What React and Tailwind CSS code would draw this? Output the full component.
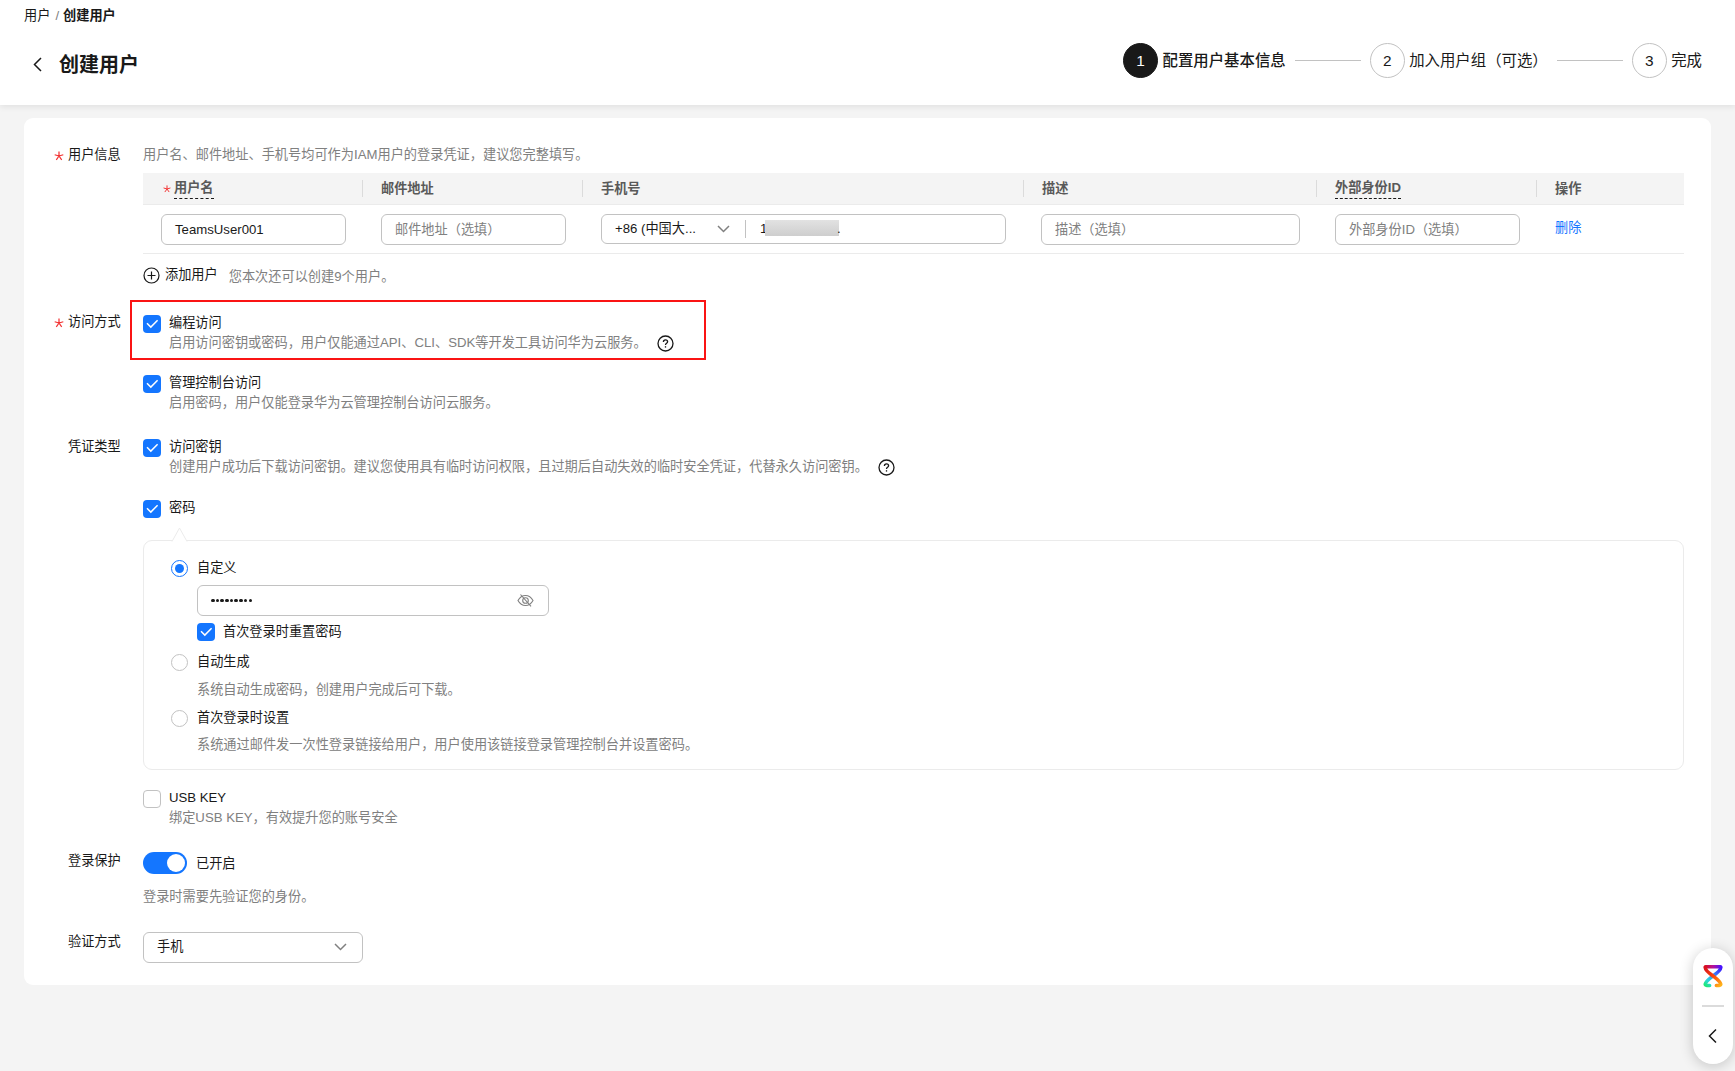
import React from 'react';

const columns = [
  { title: '用户名', width: 'w-[220px]', required: true, dashed: true },
  { title: '邮件地址', width: 'w-[220px]' },
  { title: '手机号', width: 'w-[441px]' },
  { title: '描述', width: 'w-[293px]' },
  { title: '外部身份ID', width: 'w-[220px]', dashed: true },
  { title: '操作', width: 'w-[147px]' },
];

const Star = ({ className = '' }) => (
  <svg viewBox="0 0 10 10" className={`shrink-0 ${className}`} fill="none" stroke="#f23030" strokeWidth="1.2">
    <path d="M5 0.5V5M5 5L0.7 3.7M5 5L9.3 3.7M5 5L2.3 8.8M5 5L7.7 8.8" />
  </svg>
);

const ChevronDown = () => (
  <svg width="13" height="8" viewBox="0 0 13 8" className="shrink-0" fill="none" stroke="#808080" strokeWidth="1.5">
    <path d="M1 1L6.5 6.5L12 1" />
  </svg>
);

const ChevronLeft = ({ width, height }) => (
  <svg width={width} height={height} viewBox="0 0 9 15" fill="none" stroke="#191919" strokeWidth="1.5">
    <path d="M8 1L1.5 7.5L8 14" />
  </svg>
);

const HelpIcon = () => (
  <svg width="17" height="17" viewBox="0 0 17 17" fill="none" stroke="#191919" strokeWidth="1.3">
    <circle cx="8.5" cy="8.5" r="7.5" />
    <path d="M6.4 7.1C6.4 5.7 7.3 4.9 8.5 4.9C9.7 4.9 10.6 5.7 10.6 6.8C10.6 8.3 8.5 8.3 8.5 10" />
    <path d="M8.5 11.2V12.6" />
  </svg>
);

const EyeOff = () => (
  <svg width="17" height="13" viewBox="0 0 17 13" fill="none" stroke="#808080" strokeWidth="1.1">
    <path d="M1 6.5C2.8 3.2 5.4 1.5 8.5 1.5C11.6 1.5 14.2 3.2 16 6.5C14.2 9.8 11.6 11.5 8.5 11.5C5.4 11.5 2.8 9.8 1 6.5Z" />
    <circle cx="8.5" cy="6.5" r="2.8" />
    <path d="M3.5 0.5L14 12.3" />
  </svg>
);

const Checkbox = ({ checked }) =>
  checked ? (
    <span className="flex h-[18px] w-[18px] shrink-0 items-center justify-center rounded-[4px] bg-[#1476ff]">
      <svg width="18" height="18" viewBox="0 0 18 18" fill="none" stroke="#fff" strokeWidth="1.5">
        <path d="M4 8.3L7.8 12.1L14.6 5.2" />
      </svg>
    </span>
  ) : (
    <span className="block h-[18px] w-[18px] shrink-0 rounded-[4px] border border-[#c2c2c2] bg-white" />
  );

const Radio = ({ checked }) => (
  <span
    className={`flex h-[17px] w-[17px] shrink-0 items-center justify-center rounded-full border ${
      checked ? 'border-[#1476ff]' : 'border-[#c2c2c2]'
    }`}
  >
    {checked && <span className="h-[9px] w-[9px] rounded-full bg-[#1476ff]" />}
  </span>
);

const Option = ({ checked, title, desc, help }) => (
  <div className="flex">
    <div className="pt-[2px]">
      <Checkbox checked={checked} />
    </div>
    <div className="ml-2">
      <div>{title}</div>
      {desc && (
        <div className="flex items-center text-[#808080]">
          <span>{desc}</span>
          {help && (
            <span className="ml-[10px]">
              <HelpIcon />
            </span>
          )}
        </div>
      )}
    </div>
  </div>
);

const RadioOption = ({ checked, title }) => (
  <div className="flex items-center">
    <Radio checked={checked} />
    <span className="ml-[9px]">{title}</span>
  </div>
);

const FormRow = ({ label, required, className = '', children }) => (
  <div className={`flex ${className}`}>
    <div className="flex w-[119px] shrink-0 items-start pl-[30px]">
      {required ? <Star className="mt-[6px] mr-1 h-[10px] w-[10px]" /> : <span className="w-[14px]" />}
      <span>{label}</span>
    </div>
    <div className="w-[1541px]">{children}</div>
  </div>
);

const Field = ({ value, placeholder }) => (
  <div className="flex h-[31px] items-center rounded-[6px] border border-[#c2c2c2] bg-white pl-[13px]">
    {value ? <span>{value}</span> : <span className="text-[#808080]">{placeholder}</span>}
  </div>
);

const Step = ({ number, title, active }) => (
  <div className="flex items-center">
    <span
      className={`flex h-[35px] w-[35px] items-center justify-center rounded-full border ${
        active ? 'border-[#191919] bg-[#191919] text-white' : 'border-[#c2c2c2]'
      }`}
    >
      {number}
    </span>
    <span className={`ml-[4.5px] ${active ? 'font-medium' : ''}`}>{title}</span>
  </div>
);

const StepLine = () => <span className="mx-[9px] h-px w-[66px] bg-[#c2c2c2]" />;

const Header = () => (
  <header className="relative h-[105px] bg-white shadow-[0_2px_6px_rgba(0,0,0,0.08)]">
    <div className="flex h-[30px] items-center pt-[2px] pl-6">
      <span>用户</span>
      <span className="mr-1 ml-[5px] text-[#808080]">/</span>
      <span className="font-bold">创建用户</span>
    </div>
    <div className="flex items-start justify-between pr-[33px] pl-[33px]">
      <div className="flex items-center pt-[20px]">
        <span className="mb-[2px]">
          <ChevronLeft width={9} height={15} />
        </span>
        <h1 className="ml-[17px] text-[20px] leading-[30px] font-bold">创建用户</h1>
      </div>
      <div className="flex items-center pt-[13px] text-[15.4px]">
        <Step number="1" title="配置用户基本信息" active />
        <StepLine />
        <Step number="2" title="加入用户组（可选）" />
        <StepLine />
        <Step number="3" title="完成" />
      </div>
    </div>
  </header>
);

const UserTable = () => (
  <div className="mt-2">
    <div className="flex h-8 items-center border-b border-[#ebebeb] bg-[#f4f4f4] font-bold text-[#595959]">
      {columns.map((col, i) => (
        <div
          key={col.title}
          className={`flex h-[17px] items-center pl-[18px] ${col.width} ${
            i < columns.length - 1 ? 'border-r border-[#dbdbdb]' : ''
          }`}
        >
          {col.required && <Star className="mr-[3px] ml-[2px] h-2 w-2" />}
          <span className={col.dashed ? 'border-b border-dashed border-[#191919]' : ''}>{col.title}</span>
        </div>
      ))}
    </div>
    <div className="flex h-[49px] border-b border-[#ebebeb] pt-[9px]">
      <div className="w-[220px] pr-[17px] pl-[18px]">
        <Field value="TeamsUser001" />
      </div>
      <div className="w-[220px] pr-[17px] pl-[18px]">
        <Field placeholder="邮件地址（选填）" />
      </div>
      <div className="w-[441px] pr-[18px] pl-[18px]">
        <div className="flex h-[30px] items-center rounded-[6px] border border-[#c2c2c2] pl-[13px]">
          <span className="w-[102px] whitespace-nowrap">+86 (中国大...</span>
          <ChevronDown />
          <span className="ml-[15px] h-[18px] w-px bg-[#c2c2c2]" />
          <span className="ml-[14px] w-[5px]">1</span>
          <span className="mb-[3px] h-4 w-[74px] bg-linear-to-b from-[#e2e2e2] to-[#cecece]" />
          <span className="-ml-[2px]">.</span>
        </div>
      </div>
      <div className="w-[293px] pr-[17px] pl-[17px]">
        <Field placeholder="描述（选填）" />
      </div>
      <div className="w-[220px] pr-[17px] pl-[18px]">
        <Field placeholder="外部身份ID（选填）" />
      </div>
      <div className="w-[147px] pt-1 pl-[18px] text-[#1476ff]">删除</div>
    </div>
    <div className="mt-[11px] flex h-5 items-center">
      <svg width="17" height="17" viewBox="0 0 17 17" fill="none" stroke="#191919" strokeWidth="1.2">
        <circle cx="8.5" cy="8.5" r="7.5" />
        <path d="M8.5 4.5V12.5M4.5 8.5H12.5" />
      </svg>
      <span className="ml-[5px]">添加用户</span>
      <span className="mt-[3px] ml-[11px] text-[#808080]">您本次还可以创建9个用户。</span>
    </div>
  </div>
);

const PasswordPanel = () => (
  <div className="relative mt-[22px] h-[230px] rounded-[9px] border border-[#ebebeb] pt-[17px] pl-[27px]">
    <svg className="absolute -top-[14px] left-[27px]" width="18" height="15" viewBox="0 0 18 15" fill="#fff">
      <path d="M1 14.5L8.5 1L16 14.5" stroke="#ebebeb" />
    </svg>
    <RadioOption checked title="自定义" />
    <div className="pl-[26px]">
      <div className="mt-[7px] flex h-[31px] w-[352px] items-center justify-between rounded-[6px] border border-[#c2c2c2] pr-[14px] pl-[13px]">
        <span className="flex gap-[1.1px]">
          {Array.from({ length: 9 }, (_, i) => (
            <span key={i} className="h-[3.6px] w-[3.6px] rounded-full bg-[#191919]" />
          ))}
        </span>
        <EyeOff />
      </div>
      <div className="mt-[6px] flex items-center">
        <Checkbox checked />
        <span className="ml-2">首次登录时重置密码</span>
      </div>
    </div>
    <div className="mt-[10px]">
      <RadioOption title="自动生成" />
      <p className="mt-2 pl-[26px] text-[#808080]">系统自动生成密码，创建用户完成后可下载。</p>
    </div>
    <div className="mt-2">
      <RadioOption title="首次登录时设置" />
      <p className="mt-[7px] pl-[26px] text-[#808080]">
        系统通过邮件发一次性登录链接给用户，用户使用该链接登录管理控制台并设置密码。
      </p>
    </div>
  </div>
);

const SideTool = () => (
  <div className="fixed top-[948px] right-[2px] flex h-[116px] w-10 flex-col items-center rounded-full bg-white pt-4 shadow-[0_2px_14px_rgba(0,0,0,0.2)]">
    <svg width="20" height="24" viewBox="0 0 20 24" fill="none" strokeWidth="3.6" strokeLinecap="round" strokeLinejoin="round">
      <defs>
        <linearGradient id="top" x1="2" y1="0" x2="18" y2="0" gradientUnits="userSpaceOnUse">
          <stop offset="0" stopColor="#d80f1e" />
          <stop offset="0.5" stopColor="#b5129a" />
          <stop offset="1" stopColor="#4a12ff" />
        </linearGradient>
        <linearGradient id="cool" x1="18" y1="3" x2="2" y2="21" gradientUnits="userSpaceOnUse">
          <stop offset="0" stopColor="#3d0cff" />
          <stop offset="0.5" stopColor="#3a9cf5" />
          <stop offset="0.8" stopColor="#2ad8d8" />
          <stop offset="1" stopColor="#1fe878" />
        </linearGradient>
        <linearGradient id="warm" x1="2" y1="3" x2="18" y2="21" gradientUnits="userSpaceOnUse">
          <stop offset="0" stopColor="#d80f1e" />
          <stop offset="0.55" stopColor="#ff4a0a" />
          <stop offset="1" stopColor="#ffb31a" />
        </linearGradient>
      </defs>
      <path d="M17.8 3.5C17.6 6.5 14.5 8.8 10 12C6 15 2.6 17.5 2.2 20.3C2.2 21.4 3.5 21.6 6.6 21.5" stroke="url(#cool)" />
      <path d="M2.5 2.7H17.5" stroke="url(#top)" />
      <path d="M2.2 3.5C2.4 6.5 5.5 8.8 10 12C14 15 17.4 17.5 17.8 20.3C17.8 21.4 16.5 21.6 13.4 21.5" stroke="url(#warm)" />
    </svg>
    <span className="mt-[17px] mb-[21px] h-[2px] w-[22px] shrink-0 bg-[#dbdbdb]" />
    <span className="mr-[1px]">
      <ChevronLeft width={9} height={16} />
    </span>
  </div>
);

const App = () => {
  return (
    <div className="min-h-screen bg-[#f4f4f4] font-['Liberation_Sans','Noto_Sans_CJK_SC',sans-serif] text-[13.2px] leading-5 text-[#191919]">
      <Header />
      <main className="mt-[13px] mr-6 ml-6 h-[867px] rounded-[9px] bg-white pt-[27px]">
        <FormRow label="用户信息" required>
          <p className="text-[#808080]">用户名、邮件地址、手机号均可作为IAM用户的登录凭证，建议您完整填写。</p>
          <UserTable />
        </FormRow>

        <FormRow label="访问方式" required className="mt-[27px]">
          <div className="relative pt-[1px]">
            <div className="absolute -top-[12px] -left-[13px] h-[60px] w-[576px] border-2 border-[#fa1414]" />
            <Option
              checked
              title="编程访问"
              desc="启用访问密钥或密码，用户仅能通过API、CLI、SDK等开发工具访问华为云服务。"
              help
            />
          </div>
          <div className="mt-5">
            <Option checked title="管理控制台访问" desc="启用密码，用户仅能登录华为云管理控制台访问云服务。" />
          </div>
        </FormRow>

        <FormRow label="凭证类型" className="mt-6">
          <Option
            checked
            title="访问密钥"
            desc="创建用户成功后下载访问密钥。建议您使用具有临时访问权限，且过期后自动失效的临时安全凭证，代替永久访问密钥。"
            help
          />
          <div className="mt-[21px]">
            <Option checked title="密码" />
          </div>
          <PasswordPanel />
          <div className="mt-[18px]">
            <Option title="USB KEY" desc="绑定USB KEY，有效提升您的账号安全" />
          </div>
        </FormRow>

        <FormRow label="登录保护" className="mt-[23px]">
          <div className="flex items-center pt-[1px]">
            <span className="flex h-[22px] w-11 items-center justify-end rounded-full bg-[#1476ff] pr-[2px]">
              <span className="h-[18px] w-[18px] rounded-full bg-white" />
            </span>
            <span className="mt-[2px] ml-[9px]">已开启</span>
          </div>
          <p className="mt-[13px] text-[#808080]">登录时需要先验证您的身份。</p>
        </FormRow>

        <FormRow label="验证方式" className="mt-[25px]">
          <div className="flex h-[31px] w-[220px] items-center justify-between rounded-[6px] border border-[#c2c2c2] pr-[15px] pb-[2px] pl-[13px]">
            <span>手机</span>
            <ChevronDown />
          </div>
        </FormRow>
      </main>
      <SideTool />
    </div>
  );
};

export default App;
